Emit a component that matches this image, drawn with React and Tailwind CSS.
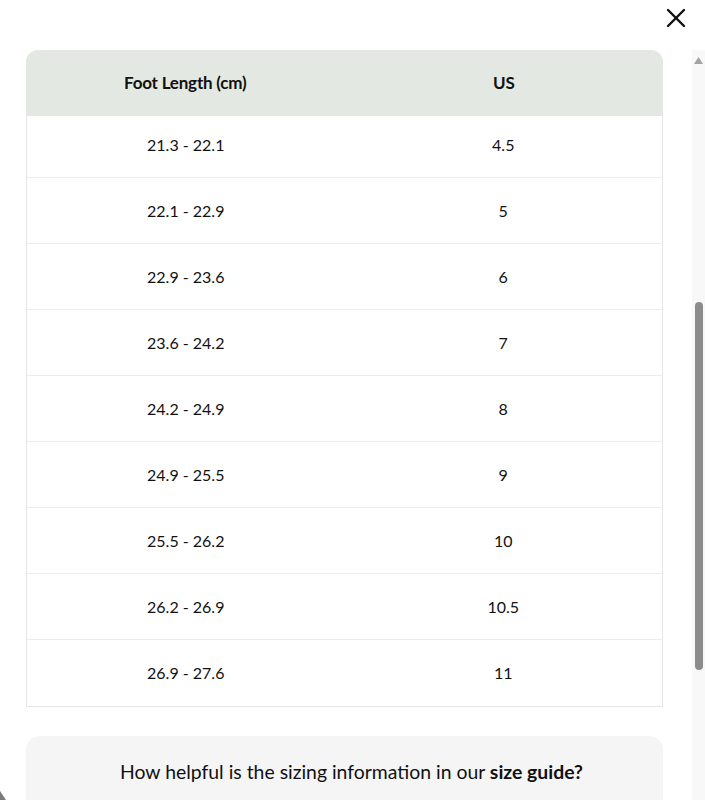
import { X } from 'lucide-react'

const SIZES = [
  ['21.3 - 22.1', '4.5'],
  ['22.1 - 22.9', '5'],
  ['22.9 - 23.6', '6'],
  ['23.6 - 24.2', '7'],
  ['24.2 - 24.9', '8'],
  ['24.9 - 25.5', '9'],
  ['25.5 - 26.2', '10'],
  ['26.2 - 26.9', '10.5'],
  ['26.9 - 27.6', '11'],
]

function Scrollbar() {
  return (
    <div className="absolute right-0 top-0 bottom-0 w-[13px] bg-[#f8f8f8]">
      <svg className="absolute left-[2px] top-[7px]" width="9" height="7" viewBox="0 0 9 7">
        <path d="M4.5 0 L9 7 L0 7 Z" fill="#a3a3a3" />
      </svg>
      <div className="absolute left-[3px] top-[252px] w-[8px] h-[368px] rounded-full bg-[#8c8c8c]" />
      <svg className="absolute left-[2px] bottom-[-3px]" width="9" height="7" viewBox="0 0 9 7">
        <path d="M0 0 L9 0 L4.5 7 Z" fill="#8c8c8c" />
      </svg>
    </div>
  )
}

export default function App() {
  return (
    <div className="relative w-[705px] h-[800px] overflow-hidden bg-white flex flex-col text-[#111]" style={{ fontFamily: 'Lato, "Noto Sans", sans-serif' }}>
      <div className="h-[50px] shrink-0 flex justify-end items-start">
        <button className="mt-[2px] mr-[13px] w-[32px] h-[32px] flex items-center justify-center">
          <X size={32} strokeWidth={1.8} color="#111" />
        </button>
      </div>

      <div className="relative flex-1">
        <div className="ml-[26px] w-[637px]">
          <div className="h-[66px] bg-[#e3e8e2] rounded-t-[12px] grid grid-cols-2 items-center text-[17px] font-bold tracking-[-0.2px]">
            <div className="text-center">Foot Length (cm)</div>
            <div className="text-center">US</div>
          </div>
          <div className="border-x border-b border-[#e6e6e6]">
            {SIZES.map(([cm, us], i) => (
              <div
                key={cm}
                className={`grid grid-cols-2 items-center text-[16px] ${i === 0 ? 'h-[62px] pb-[4px]' : 'h-[66px]'} ${i < SIZES.length - 1 ? 'border-b border-[#ececec]' : ''}`}
              >
                <div className="text-center">{cm}</div>
                <div className="text-center">{us}</div>
              </div>
            ))}
          </div>

          <div className="mt-[29px] h-[90px] rounded-[14px] bg-[#f5f5f5] pt-[21px] pl-[14px] text-center text-[19.4px]">
            How helpful is the sizing information in our <span className="font-bold">size guide?</span>
          </div>
        </div>
        <Scrollbar />
      </div>

      <svg className="absolute left-0 bottom-0" width="6" height="9" viewBox="0 0 6 9">
        <path d="M0 0 L6 9 L0 9 Z" fill="#7a7a7a" />
      </svg>
    </div>
  )
}
